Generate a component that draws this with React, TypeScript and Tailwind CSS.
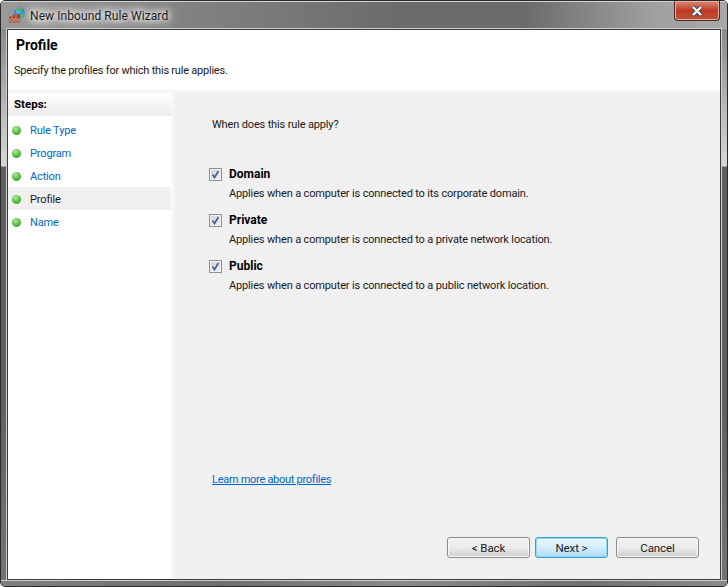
const steps = [
  { label: 'Rule Type' },
  { label: 'Program' },
  { label: 'Action' },
  { label: 'Profile', active: true },
  { label: 'Name' },
];

const options = [
  { name: 'Domain', text: 'Applies when a computer is connected to its corporate domain.' },
  { name: 'Private', text: 'Applies when a computer is connected to a private network location.' },
  { name: 'Public', text: 'Applies when a computer is connected to a public network location.' },
];

function WallIcon() {
  return (
    <svg width="17" height="17" viewBox="0 0 17 17" className="shrink-0">
      <circle cx="10.500" cy="6" r="5.500" fill="#2b86d6" />
      <circle cx="9.500" cy="4" r="3" fill="#6fb8ec" opacity="0.7" />
      <path d="M8 1.500c2-1 4-.5 5 .5s-1 2.500-2 3-3.500-1.500-3-3.500zM12 7c1.500-.5 3-.5 3.500 0-.5 2-2 3.500-3.500 4-1-1-1-3 0-4z" fill="#58b544" />
      <path d="M0 10l8-3.500 3 1.500v7.500H0z" fill="#a8452f" />
      <path d="M0 12h11M0 14h11M3 8.500V12M7 7v5M1.500 12v2M5 12v2M9 12v2M3 14v1.500M7 14v1.500" stroke="#dba98f" strokeWidth="0.700" fill="none" />
    </svg>
  );
}

function CheckBox() {
  return (
    <span className="flex h-[13px] w-[13px] shrink-0 items-center justify-center border border-[#8e8f8f] bg-gradient-to-br from-[#d0d3da] to-[#f2f2f4] shadow-[inset_0_0_0_1px_#f4f4f4]">
      <svg width="9" height="9" viewBox="0 0 9 9">
        <path d="M1.500 4.500l2 3L7.500 1" stroke="#4a5f97" strokeWidth="1.700" fill="none" />
      </svg>
    </span>
  );
}

function StepDot() {
  return (
    <span className="h-[9px] w-[9px] shrink-0 rounded-full bg-[radial-gradient(circle_at_40%_30%,#b5e8a0,#4dbb3a_55%,#3c9a2c)]" />
  );
}

function WizardButton({ label, primary, width }: { label: string; primary?: boolean; width: string }) {
  const look = primary
    ? 'border-[#3c9bd6] bg-gradient-to-b from-[#ecf7fd] via-[#d5eefb] to-[#a9daf5] shadow-[inset_0_0_0_1px_#8fdcf5]'
    : 'border-[#8c8c8c] bg-gradient-to-b from-[#f2f2f2] via-[#ebebeb] to-[#cfcfcf] shadow-[inset_0_0_0_1px_#f8f8f8]';
  return (
    <button className={`h-[21px] ${width} rounded-[3px] border text-[11.500px] leading-[18px] tracking-[-0.1px] text-[#1a1a1a] ${look}`}>
      {label}
    </button>
  );
}

export default function App() {
  return (
    <div
      className="flex h-[587px] w-[728px] flex-col overflow-hidden rounded-[5px] border border-[#2a2a2a] bg-[linear-gradient(180deg,#8c8c8c_0,#8c8c8c_30px,#d8d8d8_165px,#5e5e5e_166px,#5e5e5e_380px,#747474_587px)] text-[11px] tracking-[-0.15px] text-[#1a1a1a]"
      style={{ fontFamily: 'Roboto, "Noto Sans", sans-serif' }}
    >
      {/* title bar */}
      <div className="flex h-[28px] shrink-0 items-start justify-between bg-[linear-gradient(90deg,#9a9a9a,#828282_25%,#6a6c6c_55%,#6a6c6c_72%,#a0a0a0_90%,#a8a8a8)] pl-[8px] pr-[7px] shadow-[inset_0_1px_0_#d4d4d4]">
        <div className="flex items-center gap-[4px] pt-[6px] [text-shadow:0_0_5px_#fff,0_0_8px_#fff,0_0_12px_#fff,0_0_16px_#fff]">
          <WallIcon />
          <span className="text-[12px] leading-[16px] tracking-[0.08px]">New Inbound Rule Wizard</span>
        </div>
        <div className="flex h-[20px] w-[46px] items-center justify-center rounded-b-[4px] border border-t-0 border-[#4a2a24] bg-gradient-to-b from-[#d88a78] via-[#c03a20] to-[#b8503c] shadow-[inset_0_0_0_1px_#e8b0a0]">
          <svg width="14" height="12" viewBox="0 0 14 12">
            <path d="M3 2l8 8M11 2l-8 8" stroke="#3c4658" strokeWidth="4" fill="none" />
            <path d="M3 2l8 8M11 2l-8 8" stroke="#f4f6fa" strokeWidth="2.400" fill="none" />
          </svg>
        </div>
      </div>

      {/* client area */}
      <div className="mx-[6px] flex min-h-0 flex-1 flex-col border border-[#3a3a3a] bg-white shadow-[0_0_0_1px_#cfcfcf]">
        <div className="h-[60px] shrink-0 bg-white pl-[6px] pt-[6px]">
          <div className="pl-[2px] text-[14px] font-bold leading-[18px] tracking-normal text-black">Profile</div>
          <div className="mt-[9px] leading-[16px] tracking-[-0.22px]">Specify the profiles for which this rule applies.</div>
        </div>

        <div className="flex min-h-0 flex-1 border-t-[3px] border-[#f5f5f5]">
          <div className="flex w-[164px] shrink-0 flex-col bg-white">
            <div className="flex h-[23px] shrink-0 items-center bg-gradient-to-b from-white to-[#ececec] pl-[6px] pt-[1px] text-[11.500px] font-bold tracking-normal text-black">
              Steps:
            </div>
            <div className="mt-[2px] flex flex-col">
              {steps.map((step) => (
                <div
                  key={step.label}
                  className={`mr-[1px] flex h-[23px] items-center gap-[9px] pl-[4px] pt-[2px] ${step.active ? 'bg-[#f0f0f0] text-[#1a1a1a]' : 'text-[#0066cc]'}`}
                >
                  <StepDot />
                  <span className="pt-[2px]">{step.label}</span>
                </div>
              ))}
            </div>
          </div>

          <div className="w-[3px] shrink-0 bg-[#f5f5f5]" />

          <div className="flex min-w-0 flex-1 flex-col bg-[#f0f0f0] pl-[37px] pr-[21px]">
            <div className="mt-[24px] leading-[16px]">When does this rule apply?</div>

            <div className="mt-[33px] flex flex-col gap-[10px]">
              {options.map((option) => (
                <div key={option.name} className="flex flex-col">
                  <div className="-ml-[3px] flex h-[16px] items-center gap-[7px]">
                    <CheckBox />
                    <span className="text-[12px] font-bold tracking-normal text-black">{option.name}</span>
                  </div>
                  <div className="mt-[4px] pl-[17px] leading-[16px]">{option.text}</div>
                </div>
              ))}
            </div>

            <div className="mt-auto leading-[16px] tracking-[-0.27px] text-[#0066cc] underline">Learn more about profiles</div>

            <div className="mb-[21px] mt-[49px] flex justify-end">
              <WizardButton label="< Back" width="w-[83px]" />
              <div className="w-[5px]" />
              <WizardButton label="Next >" primary width="w-[73px]" />
              <div className="w-[8px]" />
              <WizardButton label="Cancel" width="w-[83px]" />
            </div>
          </div>
        </div>
      </div>
      <div className="h-[6px] shrink-0 bg-[linear-gradient(90deg,#808080,#6e6e6e_30%,#8a8a8a_55%,#707070_80%,#8a8a8a)] shadow-[inset_0_1px_0_#cfcfcf]" />
    </div>
  );
}
